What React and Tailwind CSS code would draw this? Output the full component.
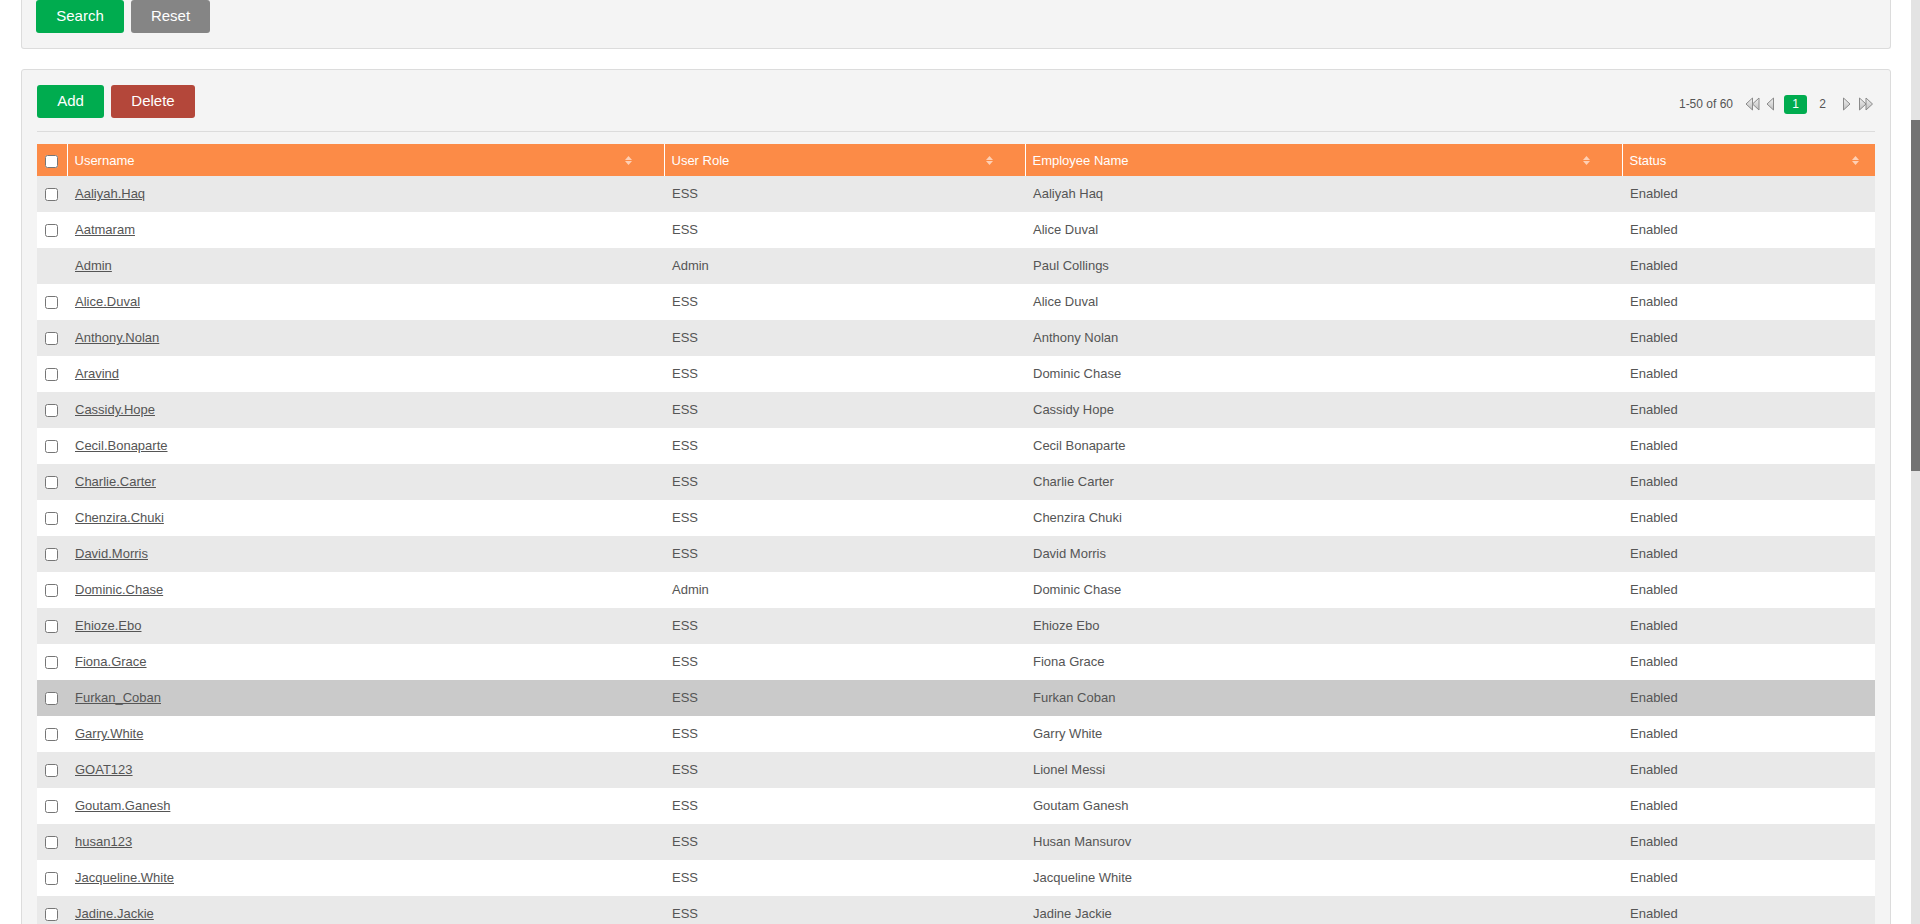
import React from 'react';

const users = [
  ['Aaliyah.Haq', 'ESS', 'Aaliyah Haq'],
  ['Aatmaram', 'ESS', 'Alice Duval'],
  ['Admin', 'Admin', 'Paul Collings'],
  ['Alice.Duval', 'ESS', 'Alice Duval'],
  ['Anthony.Nolan', 'ESS', 'Anthony Nolan'],
  ['Aravind', 'ESS', 'Dominic Chase'],
  ['Cassidy.Hope', 'ESS', 'Cassidy Hope'],
  ['Cecil.Bonaparte', 'ESS', 'Cecil Bonaparte'],
  ['Charlie.Carter', 'ESS', 'Charlie Carter'],
  ['Chenzira.Chuki', 'ESS', 'Chenzira Chuki'],
  ['David.Morris', 'ESS', 'David Morris'],
  ['Dominic.Chase', 'Admin', 'Dominic Chase'],
  ['Ehioze.Ebo', 'ESS', 'Ehioze Ebo'],
  ['Fiona.Grace', 'ESS', 'Fiona Grace'],
  ['Furkan_Coban', 'ESS', 'Furkan Coban'],
  ['Garry.White', 'ESS', 'Garry White'],
  ['GOAT123', 'ESS', 'Lionel Messi'],
  ['Goutam.Ganesh', 'ESS', 'Goutam Ganesh'],
  ['husan123', 'ESS', 'Husan Mansurov'],
  ['Jacqueline.White', 'ESS', 'Jacqueline White'],
  ['Jadine.Jackie', 'ESS', 'Jadine Jackie'],
];

const SortIcon = () => (
  <svg width="7" height="9" viewBox="0 0 7 9" className="shrink-0">
    <polygon points="0,4 3.5,0 7,4" fill="#fff" fillOpacity="0.6" />
    <polygon points="0,5 3.5,9 7,5" fill="#fff" fillOpacity="0.6" />
  </svg>
);

// pager arrows: grey outlined triangles with a light fill
const Tri = ({ dir, w, children }) => (
  <svg width={w} height="14" viewBox={`0 0 ${w} 14`}>
    <defs>
      <linearGradient id={`g-${dir}-${w}`} x1="0" y1="0" x2="0" y2="1">
        <stop offset="0" stopColor="#f2f2f2" />
        <stop offset="1" stopColor="#bdbdbd" />
      </linearGradient>
    </defs>
    {children(`url(#g-${dir}-${w})`)}
  </svg>
);

const First = () => (
  <Tri dir="first" w={15}>
    {(f) => (
      <>
        <polygon points="7.5,1 1,7 7.5,13" fill={f} stroke="#8a8a8a" strokeWidth="1" />
        <polygon points="14,1 7.5,7 14,13" fill={f} stroke="#8a8a8a" strokeWidth="1" />
      </>
    )}
  </Tri>
);
const Prev = () => (
  <Tri dir="prev" w={8}>
    {(f) => <polygon points="7.5,1 1,7 7.5,13" fill={f} stroke="#8a8a8a" strokeWidth="1" />}
  </Tri>
);
const Next = () => (
  <Tri dir="next" w={8}>
    {(f) => <polygon points="0.5,1 7,7 0.5,13" fill={f} stroke="#8a8a8a" strokeWidth="1" />}
  </Tri>
);
const Last = () => (
  <Tri dir="last" w={15}>
    {(f) => (
      <>
        <polygon points="0.5,1 7,7 0.5,13" fill={f} stroke="#8a8a8a" strokeWidth="1" />
        <polygon points="7,1 13.5,7 7,13" fill={f} stroke="#8a8a8a" strokeWidth="1" />
      </>
    )}
  </Tri>
);

const Box = () => (
  <input type="checkbox" className="w-[13px] h-[13px] m-0 align-middle" readOnly />
);

export default function App() {
  return (
    <div className="h-[924px] w-full flex overflow-hidden bg-white font-['Liberation_Sans',Arial,sans-serif] text-[#555]">
      <div className="flex-1 min-w-0 pl-[21px] pr-[20px]">
        {/* filter card, scrolled so only its bottom shows */}
        <div className="bg-[#f4f4f4] border-x border-b border-[#dcdcdc] rounded-b-[3px] px-[14px] pb-[15px]">
          <div className="flex gap-[7px]">
            <button className="w-[88px] h-[33px] bg-[#00ac4f] text-white text-[15px] rounded-[3px]">Search</button>
            <button className="w-[79px] h-[33px] bg-[#858585] text-white text-[15px] rounded-[3px]">Reset</button>
          </div>
        </div>

        <div className="mt-[20px] bg-[#f4f4f4] border border-[#dcdcdc] rounded-[3px] px-[15px] pt-[15px]">
          <div className="flex items-center justify-between pb-[13px] border-b border-[#dcdcdc]">
            <div className="flex gap-[7px]">
              <button className="w-[67px] h-[33px] bg-[#00ac4f] text-white text-[15px] rounded-[3px]">Add</button>
              <button className="w-[84px] h-[33px] bg-[#b4473a] text-white text-[15px] rounded-[3px]">Delete</button>
            </div>
            <div className="flex items-center mt-[5px] text-[12px]">
              <span>1-50 of 60</span>
              <div className="flex items-center ml-[12px] gap-[6px]">
                <First />
                <Prev />
              </div>
              <div className="flex items-center ml-[10px] gap-[4px]">
                <span className="w-[23px] h-[19px] flex items-center justify-center bg-[#00ac4f] text-white rounded-[3px]">1</span>
                <span className="w-[23px] h-[19px] flex items-center justify-center">2</span>
              </div>
              <div className="flex items-center ml-[9px] gap-[8px] mr-[1px]">
                <Next />
                <Last />
              </div>
            </div>
          </div>

          <table className="mt-[12px] w-full table-fixed border-collapse text-[13px]">
            <colgroup>
              <col className="w-[30px]" />
              <col className="w-[597px]" />
              <col className="w-[361px]" />
              <col className="w-[597px]" />
              <col />
            </colgroup>
            <thead>
              <tr className="h-[32px] bg-[#fc8b47] text-white">
                <th className="pl-[8px] pt-[1px] text-left font-normal"><Box /></th>
                {[['Username', 'pr-[32px]'], ['User Role', 'pr-[32px]'], ['Employee Name', 'pr-[32px]'], ['Status', 'pr-[16px]']].map(([h, pr]) => (
                  <th key={h} className={`border-l border-white pl-[7px] pt-[1px] ${pr} text-left font-normal`}>
                    <div className="flex items-center justify-between">
                      <span>{h}</span>
                      <SortIcon />
                    </div>
                  </th>
                ))}
              </tr>
            </thead>
            <tbody>
              {users.map(([u, role, name], i) => {
                const bg = u === 'Furkan_Coban' ? 'bg-[#cacaca]' : i % 2 === 0 ? 'bg-[#e9e9e9]' : 'bg-white';
                return (
                  <tr key={u} className={`h-[36px] ${bg}`}>
                    <td className="pl-[8px]">{u !== 'Admin' && <Box />}</td>
                    <td className="pl-[8px]"><a className="underline cursor-pointer">{u}</a></td>
                    <td className="pl-[8px]">{role}</td>
                    <td className="pl-[8px]">{name}</td>
                    <td className="pl-[8px]">Enabled</td>
                  </tr>
                );
              })}
            </tbody>
          </table>
        </div>
      </div>

      {/* page scrollbar */}
      <div className="w-[9px] shrink-0 bg-[#e3e3e3] pt-[120px]">
        <div className="h-[351px] bg-[#737373]" />
      </div>
    </div>
  );
}
